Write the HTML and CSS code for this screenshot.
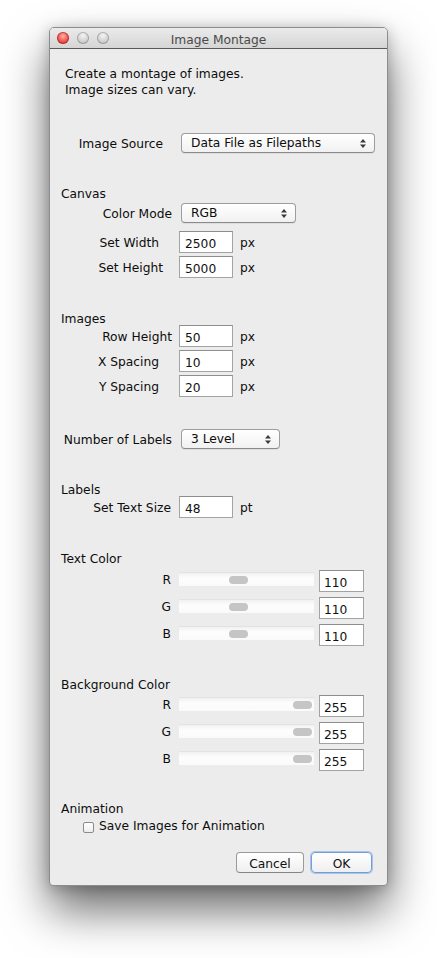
FILE: index.html
```html
<!DOCTYPE html>
<html lang="en">
<head>
    <meta charset="UTF-8">
    <meta name="viewport" content="width=device-width, initial-scale=1.0">
    <title>Image Montage</title>
    <link rel="stylesheet" href="styles.css">
</head>
<body>

    <div class="window">
        <div class="titlebar">
            <div class="lights">
                <span class="light close"></span>
                <span class="light"></span>
                <span class="light"></span>
            </div>
            <div class="title">Image Montage</div>
        </div>

        <div class="content">
            <p class="intro">Create a montage of images.<br>Image sizes can vary.</p>

            <div class="row source">
                <span class="lbl pad9">Image Source</span>
                <div class="popup w194">Data File as Filepaths
                    <svg class="arrows" width="6" height="9" viewBox="0 0 6 9"><path d="M3 0 L6 3.5 L0 3.5 Z M3 9 L6 5.5 L0 5.5 Z"/></svg>
                </div>
            </div>

            <div class="group first">Canvas</div>
            <div class="row popup-row">
                <span class="lbl">Color Mode</span>
                <div class="popup w115">RGB
                    <svg class="arrows" width="6" height="9" viewBox="0 0 6 9"><path d="M3 0 L6 3.5 L0 3.5 Z M3 9 L6 5.5 L0 5.5 Z"/></svg>
                </div>
            </div>
            <div class="row field gap8">
                <span class="lbl pad13">Set Width</span>
                <input class="num" type="text" value="2500">
                <span class="unit">px</span>
            </div>
            <div class="row field">
                <span class="lbl pad9">Set Height</span>
                <input class="num" type="text" value="5000">
                <span class="unit">px</span>
            </div>

            <div class="group">Images</div>
            <div class="row field gap0">
                <span class="lbl">Row Height</span>
                <input class="num" type="text" value="50">
                <span class="unit">px</span>
            </div>
            <div class="row field">
                <span class="lbl pad13">X Spacing</span>
                <input class="num" type="text" value="10">
                <span class="unit">px</span>
            </div>
            <div class="row field">
                <span class="lbl pad13">Y Spacing</span>
                <input class="num" type="text" value="20">
                <span class="unit">px</span>
            </div>

            <div class="row popup-row gap32">
                <span class="lbl">Number of Labels</span>
                <div class="popup w99">3 Level
                    <svg class="arrows" width="6" height="9" viewBox="0 0 6 9"><path d="M3 0 L6 3.5 L0 3.5 Z M3 9 L6 5.5 L0 5.5 Z"/></svg>
                </div>
            </div>

            <div class="group">Labels</div>
            <div class="row field gap0">
                <span class="lbl pad1">Set Text Size</span>
                <input class="num" type="text" value="48">
                <span class="unit">pt</span>
            </div>

            <div class="group">Text Color</div>
            <div class="row slide first-slide">
                <span class="lbl pad1">R</span>
                <div class="track"><span class="knob" style="left: 50px;"></span></div>
                <input class="small" type="text" value="110">
            </div>
            <div class="row slide">
                <span class="lbl pad1">G</span>
                <div class="track"><span class="knob" style="left: 50px;"></span></div>
                <input class="small" type="text" value="110">
            </div>
            <div class="row slide">
                <span class="lbl pad1">B</span>
                <div class="track"><span class="knob" style="left: 50px;"></span></div>
                <input class="small" type="text" value="110">
            </div>

            <div class="group bg">Background Color</div>
            <div class="row slide bg-first">
                <span class="lbl pad1">R</span>
                <div class="track"><span class="knob" style="left: 114px;"></span></div>
                <input class="small" type="text" value="255">
            </div>
            <div class="row slide">
                <span class="lbl pad1">G</span>
                <div class="track"><span class="knob" style="left: 114px;"></span></div>
                <input class="small" type="text" value="255">
            </div>
            <div class="row slide">
                <span class="lbl pad1">B</span>
                <div class="track"><span class="knob" style="left: 114px;"></span></div>
                <input class="small" type="text" value="255">
            </div>

            <div class="group anim">Animation</div>
            <label class="check">
                <span class="box"></span>
                Save Images for Animation
            </label>

            <div class="buttons">
                <button class="btn">Cancel</button>
                <button class="btn ok">OK</button>
            </div>
        </div>
    </div>

</body>
</html>
```

FILE: styles.css
```css
*{ box-sizing: border-box; }
html, body{ margin: 0; padding: 0; background-color: #fff; }
body{
    font-family: "DejaVu Sans", sans-serif;
    font-size: 12.25px;
    color: #0d0d0d;
    min-height: 958px;
    padding: 27px 0 72px 49px;
}

.window{
    width: 339px;
    height: 859px;
    background: #ececec;
    border: 1px solid #8c8c8c;
    border-radius: 5px 5px 4px 4px;
    box-shadow: 0 24px 46px rgba(0, 0, 0, 0.58), 0 2px 14px rgba(0, 0, 0, 0.22);
}

/* title bar */
.titlebar{
    height: 21px;
    position: relative;
    background: linear-gradient(#ebebeb, #d5d5d5);
    border-bottom: 1px solid #595959;
    border-radius: 4px 4px 0 0;
}
.lights{
    position: absolute;
    left: 7px;
    top: 4px;
    display: flex;
    gap: 8px;
}
.light{
    width: 12px;
    height: 12px;
    border-radius: 50%;
    background: radial-gradient(circle at 50% 30%, #f4f4f4, #cfcfcf 60%, #b9b9b9);
    box-shadow: inset 0 0 0 1px rgba(0, 0, 0, 0.22);
}
.light.close{
    background: radial-gradient(circle at 50% 35%, #ffb2ac, #f0514a 55%, #c42b25);
    box-shadow: inset 0 0 0 1px rgba(120, 20, 15, 0.45);
}
.title{
    text-align: center;
    height: 21px;
    padding-top: 2px;
    line-height: 20px;
    color: #4a4a4a;
}

/* body of the dialog */
.content{
    padding-left: 11px;
}
.intro{
    margin: 16px 0 0 4px;
    height: 32px;
    padding-top: 1px;
    line-height: 16px;
}
.group{
    margin-top: 31px;
    height: 16px;
    padding-top: 2px;
    line-height: 16px;
}
.group.bg{ margin-top: 29px; }
.group.anim{ margin-top: 28px; }

.row{
    display: flex;
    align-items: center;
    margin-top: 3px;
}
.row.source{ margin-top: 36px; height: 20px; }
.row.popup-row{ height: 20px; }
.row.gap8{ margin-top: 8px; }
.row.gap0{ margin-top: 0; }
.row.gap32{ margin-top: 32px; }
.row.slide{ margin-top: 5px; }
.row.first-slide{ margin-top: 5px; }
.row.bg-first{ margin-top: 4px; }

.lbl{
    width: 111px;
    padding-top: 2px;
    text-align: right;
    white-space: nowrap;
}
.lbl.pad1{ padding-right: 1px; }
.lbl.pad9{ padding-right: 9px; }
.lbl.pad13{ padding-right: 13px; }
.slide .lbl{ margin-bottom: 4px; }

/* pop up buttons */
.popup{
    position: relative;
    margin-left: 9px;
    height: 20px;
    line-height: 19px;
    padding-left: 9px;
    border: 1px solid #9d9d9d;
    border-bottom-color: #8a8a8a;
    border-radius: 4px;
    background: linear-gradient(#ffffff, #f1f1f1);
    box-shadow: 0 1px 0 rgba(0, 0, 0, 0.06);
}
.w194{ width: 194px; }
.w115{ width: 115px; }
.w99{ width: 99px; }
.arrows{
    position: absolute;
    right: 8px;
    top: 5px;
    fill: #3a3a3a;
}

/* text fields */
input{
    font-family: inherit;
    font-size: 12.25px;
    color: #111;
    background: #fff;
    border: 1px solid #a3a3a3;
    border-top-color: #8e8e8e;
    border-radius: 0;
    outline: none;
}
.num{
    margin-left: 7px;
    width: 54px;
    height: 22px;
    padding: 3px 0 0 5px;
}
.unit{
    margin-left: 7px;
    padding-top: 2px;
}
.small{
    margin-left: 5px;
    width: 45px;
    height: 22px;
    padding: 3px 0 0 4px;
}

/* sliders */
.track{
    position: relative;
    margin-left: 7px;
    width: 135px;
    height: 14px;
    margin-bottom: 4px;
    background: linear-gradient(#f1f1f1, #fdfdfd 40%, #fafafa);
    border-top: 1px solid #e2e2e2;
}
.knob{
    position: absolute;
    top: 3px;
    width: 19px;
    height: 8px;
    border-radius: 4px;
    background: #c5c5c5;
}

/* check box */
.check{
    display: flex;
    align-items: center;
    margin: 2px 0 0 22px;
    height: 16px;
    line-height: 16px;
}
.box{
    width: 11px;
    height: 11px;
    margin: 2px 5px 0 0;
    border: 1px solid #8b8b8b;
    border-radius: 2px;
    background: linear-gradient(#fff, #ededed);
}
.check{ padding-top: 2px; }

/* dialog buttons */
.buttons{
    display: flex;
    justify-content: flex-end;
    gap: 7px;
    margin: 19px 15px 0 0;
}
.btn{
    font-family: inherit;
    font-size: 12.25px;
    color: #111;
    height: 21px;
    padding: 2px 0 0;
    border: 1px solid #9a9a9a;
    border-bottom-color: #858585;
    border-radius: 4px;
    background: linear-gradient(#ffffff, #efefef);
    width: 68px;
}
.btn.ok{
    width: 61px;
    border: 1px solid #6f9fdc;
    box-shadow: 0 0 0 1px rgba(120, 165, 225, 0.55);
}
```
